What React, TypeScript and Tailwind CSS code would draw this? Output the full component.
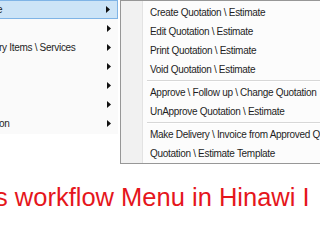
import React from 'react';

const Arrow = () => (
  <svg width="4" height="7" viewBox="0 0 4 7" className="shrink-0">
    <path d="M0 0 L4 3.5 L0 7 Z" fill="#111" />
  </svg>
);

const leftRows = [
  { text: 'e', offset: 'ml-[-3px]', active: true },
  { text: '', offset: '', active: false },
  { text: 'ry Items \\ Services', offset: 'ml-[-1px]', active: false },
  { text: '', offset: '', active: false },
  { text: '', offset: '', active: false },
  { text: '', offset: '', active: false },
  { text: 'on', offset: 'ml-[-1px]', active: false },
];

const groups = [
  [
    'Create Quotation \\ Estimate',
    'Edit Quotation \\ Estimate',
    'Print Quotation \\ Estimate',
    'Void Quotation \\ Estimate',
  ],
  ['Approve \\ Follow up \\ Change Quotation', 'UnApprove Quotation \\ Estimate'],
  ['Make Delivery \\ Invoice from Approved Quotation', 'Quotation \\ Estimate Template'],
];

export default function App() {
  return (
    <div className="w-[320px] h-[240px] overflow-hidden bg-white font-['Liberation_Sans',Arial,sans-serif]">
      <div className="flex h-[164px] items-start">
        {/* parent menu, cropped on the left */}
        <div className="w-[118px] h-[134px] bg-[#fafafa] flex flex-col">
          {leftRows.map((r, i) => (
            <div
              key={i}
              className={
                'h-[19px] flex items-center justify-between pr-[7px] text-[10px] tracking-[-0.3px] text-[#1e1e1e] whitespace-nowrap overflow-hidden ' +
                (r.active ? 'bg-[#cce4f7] border border-l-0 border-[#7fb4e6]' : '')
              }
            >
              <span className={r.offset}>{r.text}</span>
              <Arrow />
            </div>
          ))}
        </div>
        <div className="w-[2px]" />
        {/* submenu */}
        <div className="flex-1 h-[164px] border-l border-b border-t border-[#979797] bg-[#fcfcfc] flex relative overflow-hidden">
          <div className="w-[22px] bg-[#f1f1f1] border-r border-[#e3e3e3] shrink-0" />
          <div className="flex-1 pt-[2px] flex flex-col">
            {groups.map((g, gi) => (
              <div key={gi} className="flex flex-col">
                {gi > 0 && (
                  <div className="h-[4px] flex flex-col justify-center pl-[4px]">
                    <div className="h-[1px] bg-[#d7d7d7]" />
                    <div className="h-[1px] bg-white" />
                  </div>
                )}
                {g.map((t) => (
                  <div
                    key={t}
                    className="h-[19px] flex items-center pl-[7px] text-[10px] tracking-[-0.3px] text-[#1e1e1e] whitespace-nowrap"
                  >
                    {t}
                  </div>
                ))}
              </div>
            ))}
          </div>
        </div>
      </div>
      <div className="mt-[21px] whitespace-nowrap text-[25.5px] leading-none text-[#e5161c] ml-[-5px]">
        s workflow Menu in Hinawi I
      </div>
    </div>
  );
}
